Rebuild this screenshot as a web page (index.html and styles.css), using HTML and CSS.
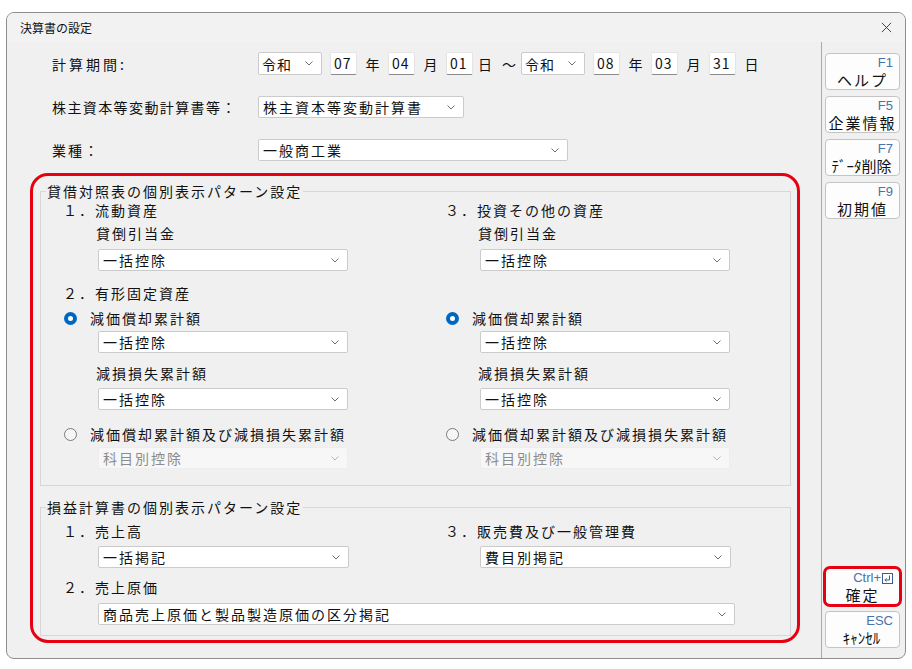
FILE: index.html
```html
<!DOCTYPE html>
<html lang="ja">
<head>
<meta charset="utf-8">
<title>決算書の設定</title>
<link rel="stylesheet" href="styles.css">
</head>
<body>
<div class="window">
  <div class="titlebar">
    <span class="title">決算書の設定</span>
    <svg class="close" viewBox="0 0 12 12"><path d="M1,1 L11,11 M11,1 L1,11"/></svg>
  </div>
  <div class="client">
    <div class="main">
      <div class="row row1">
        <span class="lbl lbl-period">計算期間:</span>
        <div class="sel era"><span>令和</span><svg class="chev" viewBox="0 0 8 5"><polyline points="0.5,0.5 4,4 7.5,0.5"/></svg></div>
        <div class="inp">07</div><span class="unit">年</span>
        <div class="inp">04</div><span class="unit">月</span>
        <div class="inp">01</div><span class="unit unit-s">日</span>
        <span class="unit unit-s">～</span>
        <div class="sel era"><span>令和</span><svg class="chev" viewBox="0 0 8 5"><polyline points="0.5,0.5 4,4 7.5,0.5"/></svg></div>
        <div class="inp">08</div><span class="unit">年</span>
        <div class="inp">03</div><span class="unit">月</span>
        <div class="inp">31</div><span class="unit">日</span>
      </div>
      <div class="row row2">
        <span class="lbl lbl-kabu">株主資本等変動計算書等：</span>
        <div class="sel w206"><span>株主資本等変動計算書</span><svg class="chev" viewBox="0 0 8 5"><polyline points="0.5,0.5 4,4 7.5,0.5"/></svg></div>
      </div>
      <div class="row row3">
        <span class="lbl">業種：</span>
        <div class="sel w310"><span>一般商工業</span><svg class="chev" viewBox="0 0 8 5"><polyline points="0.5,0.5 4,4 7.5,0.5"/></svg></div>
      </div>

      <div class="annot">
        <fieldset class="grp grp-bs">
          <legend>貸借対照表の個別表示パターン設定</legend>
          <div class="cols">
            <div class="col">
              <div class="hd">１．流動資産</div>
              <div class="sub">貸倒引当金</div>
              <div class="sel ind sel-a"><span>一括控除</span><svg class="chev" viewBox="0 0 8 5"><polyline points="0.5,0.5 4,4 7.5,0.5"/></svg></div>
              <div class="hd hd2">２．有形固定資産</div>
              <div class="radio r1"><span class="rb on"></span><span>減価償却累計額</span></div>
              <div class="sel ind sel-b"><span>一括控除</span><svg class="chev" viewBox="0 0 8 5"><polyline points="0.5,0.5 4,4 7.5,0.5"/></svg></div>
              <div class="sub sub2">減損損失累計額</div>
              <div class="sel ind sel-c"><span>一括控除</span><svg class="chev" viewBox="0 0 8 5"><polyline points="0.5,0.5 4,4 7.5,0.5"/></svg></div>
              <div class="radio r2"><span class="rb"></span><span>減価償却累計額及び減損損失累計額</span></div>
              <div class="sel ind sel-b dis"><span>科目別控除</span><svg class="chev" viewBox="0 0 8 5"><polyline points="0.5,0.5 4,4 7.5,0.5"/></svg></div>
            </div>
            <div class="col col-r">
              <div class="hd">３．投資その他の資産</div>
              <div class="sub">貸倒引当金</div>
              <div class="sel ind sel-a"><span>一括控除</span><svg class="chev" viewBox="0 0 8 5"><polyline points="0.5,0.5 4,4 7.5,0.5"/></svg></div>
              <div class="hd hd2"></div>
              <div class="radio r1"><span class="rb on"></span><span>減価償却累計額</span></div>
              <div class="sel ind sel-b"><span>一括控除</span><svg class="chev" viewBox="0 0 8 5"><polyline points="0.5,0.5 4,4 7.5,0.5"/></svg></div>
              <div class="sub sub2">減損損失累計額</div>
              <div class="sel ind sel-c"><span>一括控除</span><svg class="chev" viewBox="0 0 8 5"><polyline points="0.5,0.5 4,4 7.5,0.5"/></svg></div>
              <div class="radio r2"><span class="rb"></span><span>減価償却累計額及び減損損失累計額</span></div>
              <div class="sel ind sel-b dis"><span>科目別控除</span><svg class="chev" viewBox="0 0 8 5"><polyline points="0.5,0.5 4,4 7.5,0.5"/></svg></div>
            </div>
          </div>
        </fieldset>

        <fieldset class="grp grp-pl">
          <legend>損益計算書の個別表示パターン設定</legend>
          <div class="pl-grid">
            <div class="hd pl-hd">１．売上高</div>
            <div class="hd pl-hd">３．販売費及び一般管理費</div>
            <div class="sel ind pl-sel"><span>一括掲記</span><svg class="chev" viewBox="0 0 8 5"><polyline points="0.5,0.5 4,4 7.5,0.5"/></svg></div>
            <div class="sel ind pl-sel"><span>費目別掲記</span><svg class="chev" viewBox="0 0 8 5"><polyline points="0.5,0.5 4,4 7.5,0.5"/></svg></div>
            <div class="hd pl-hd2 span2">２．売上原価</div>
            <div class="sel ind pl-wide span2"><span>商品売上原価と製品製造原価の区分掲記</span><svg class="chev" viewBox="0 0 8 5"><polyline points="0.5,0.5 4,4 7.5,0.5"/></svg></div>
          </div>
        </fieldset>
      </div>
    </div>

    <div class="side">
      <div class="fgroup">
        <div class="fbtn"><span class="key">F1</span><span class="cap">ヘルプ</span></div>
        <div class="fbtn"><span class="key">F5</span><span class="cap">企業情報</span></div>
        <div class="fbtn"><span class="key">F7</span><span class="cap cap-n">ﾃﾞｰﾀ削除</span></div>
        <div class="fbtn"><span class="key">F9</span><span class="cap">初期値</span></div>
      </div>
      <div class="fgroup">
        <div class="fbtn ok"><span class="key">Ctrl+<svg class="enter" viewBox="0 0 11 11"><rect x="0.5" y="0.5" width="10" height="10" fill="#fff" stroke="#3d5f8f"/><polyline points="7.5,2.5 7.5,7 3,7" fill="none" stroke="#3d5f8f"/><polyline points="4.5,5.3 2.8,7 4.5,8.7" fill="none" stroke="#3d5f8f"/></svg></span><span class="cap">確定</span></div>
        <div class="fbtn"><span class="key">ESC</span><span class="cap cap-n">ｷｬﾝｾﾙ</span></div>
      </div>
    </div>
  </div>
</div>
</body>
</html>
```

FILE: styles.css
```css
* { box-sizing: border-box; }
html, body { margin: 0; padding: 0; background: #ffffff; }
body {
  font-family: "Noto Sans CJK JP", "Noto Sans", sans-serif;
  font-size: 14px;
  color: #111;
  width: 912px;
  height: 669px;
  overflow: hidden;
}

.window {
  margin: 12px 0 0 6px;
  width: 900px;
  height: 647px;
  border: 1px solid #8e8e8e;
  border-radius: 8px;
  background: #f0f0f0;
  display: flex;
  flex-direction: column;
  overflow: hidden;
}

.titlebar {
  height: 29px;
  flex: none;
  display: flex;
  align-items: center;
  justify-content: space-between;
  padding: 0 13px 0 13px;
  background: #f2f2f2;
}
.title { font-size: 12px; line-height: 16px; letter-spacing: 0; }
.close { width: 11px; height: 11px; fill: none; stroke: #333; stroke-width: 1; }

.client { flex: 1; display: flex; min-height: 0; }

.main {
  width: 814px;
  flex: none;
  padding-top: 10px;
}

.row { display: flex; align-items: center; padding-left: 45px; }
.row1 { height: 23px; }
.row2 { height: 22px; margin-top: 21px; }
.row3 { height: 22px; margin-top: 21px; }
.lbl { width: 206px; flex: none; letter-spacing: 2px; line-height: 20px; }
.lbl-period { letter-spacing: 3px; }
.lbl-kabu { letter-spacing: 1.4px; }

/* select-like box */
.sel {
  display: flex;
  align-items: center;
  justify-content: space-between;
  height: 22px;
  background: #fff;
  border: 1px solid #cbcbcb;
  border-radius: 2px;
  padding: 0 8px 0 4px;
  letter-spacing: 2px;
  line-height: 20px;
  white-space: nowrap;
  flex: none;
}
.sel span { display: block; }
.chev { width: 8px; height: 5px; flex: none; fill: none; stroke: #6f6f6f; stroke-width: 1; }
.era { width: 64px; height: 23px; letter-spacing: 1px; padding-left: 3px; }
.w206 { width: 206px; }
.w310 { width: 310px; }

.inp {
  width: 27px;
  height: 23px;
  flex: none;
  background: #fff;
  border: 1px solid #e4e4e4;
  border-bottom: 1px solid #8a8a8a;
  border-radius: 2px;
  padding-left: 3px;
  line-height: 21px;
  letter-spacing: 1px;
}
.era + .inp { margin-left: 8px; }
.unit { width: 31px; flex: none; text-align: center; line-height: 20px; }
.unit-s { width: 24px; }

/* red annotation frame */
.annot {
  margin: 12px 0 0 23px;
  width: 770px;
  height: 470px;
  border: 3px solid #e60012;
  border-radius: 18px;
  padding-bottom: 3px;
}

.grp {
  margin: 5px 6px 0 7px;
  padding: 0 0 16px 5px;
  border: 1px solid #d7d7d7;
  border-radius: 0;
  min-width: 0;
}
.grp legend {
  padding: 0 1px;
  line-height: 20px;
  letter-spacing: 2px;
}
.grp-pl { margin-top: 11px; padding-bottom: 10px; }

.cols {
  display: grid;
  grid-template-columns: 382px 1fr;
  padding-left: 17px;
}
.col { display: flex; flex-direction: column; }

.hd { height: 20px; line-height: 20px; letter-spacing: 2px; margin-top: -1px; white-space: nowrap; }
.hd2 { margin-top: 12px; }
.sub { height: 20px; line-height: 20px; letter-spacing: 2px; margin: 3px 0 0 33px; }
.sub2 { margin-top: 10px; }
.ind { margin-left: 35px; width: 250px; }
.sel-a { margin-top: 6px; }
.sel-b { margin-top: 3px; }
.sel-c { margin-top: 5px; }

.radio { display: flex; align-items: center; height: 20px; line-height: 20px; letter-spacing: 2px; white-space: nowrap; }
.r1 { margin-top: 5px; }
.r2 { margin-top: 14px; }
.rb {
  width: 13px; height: 13px; flex: none;
  border-radius: 50%;
  border: 1px solid #7a7a7a;
  background: #f6f6f6;
  margin-right: 13px;
  margin-left: 1px;
}
.rb.on {
  border: 4px solid #0067c0;
  background: #fff;
}

.sel.dis {
  background: #f7f7f7;
  border-color: #ededed;
  color: #8c8c8c;
}
.sel.dis .chev { stroke: #b5b5b5; }

.pl-grid {
  display: grid;
  grid-template-columns: 382px 1fr;
  padding-left: 17px;
}
.pl-hd { margin-top: 4px; }
.pl-sel { margin-top: 5px; width: 251px; }
.pl-hd2 { margin-top: 9px; }
.pl-wide { margin-top: 6px; width: 637px; }
.span2 { grid-column: 1 / -1; }

/* side panel */
.side {
  flex: 1;
  border-left: 1px solid #a8a8a8;
  padding: 11px 0 10px 3px;
  display: flex;
  flex-direction: column;
  justify-content: space-between;
}
.fgroup { display: flex; flex-direction: column; gap: 6px; }
.fbtn {
  width: 75px;
  height: 37px;
  background: #fdfdfd;
  border: 1px solid #c4c4c4;
  border-radius: 4px;
  display: flex;
  flex-direction: column;
  padding: 2px 6px 0 4px;
}
.key {
  align-self: flex-end;
  font-family: "Liberation Sans", Arial, sans-serif;
  font-size: 13px;
  line-height: 14px;
  color: #4872a8;
  display: flex;
  align-items: center;
  gap: 1px;
}
.cap {
  align-self: center;
  font-size: 15px;
  line-height: 18px;
  letter-spacing: 2px;
  margin-right: -2px;
  margin-top: 1px;
  white-space: nowrap;
}
.cap-n { letter-spacing: 0; margin-right: 0; }
.ok {
  outline: 3px solid #e60012;
  outline-offset: -1px;
  border-radius: 5px;
}
.enter { width: 11px; height: 11px; }
```
